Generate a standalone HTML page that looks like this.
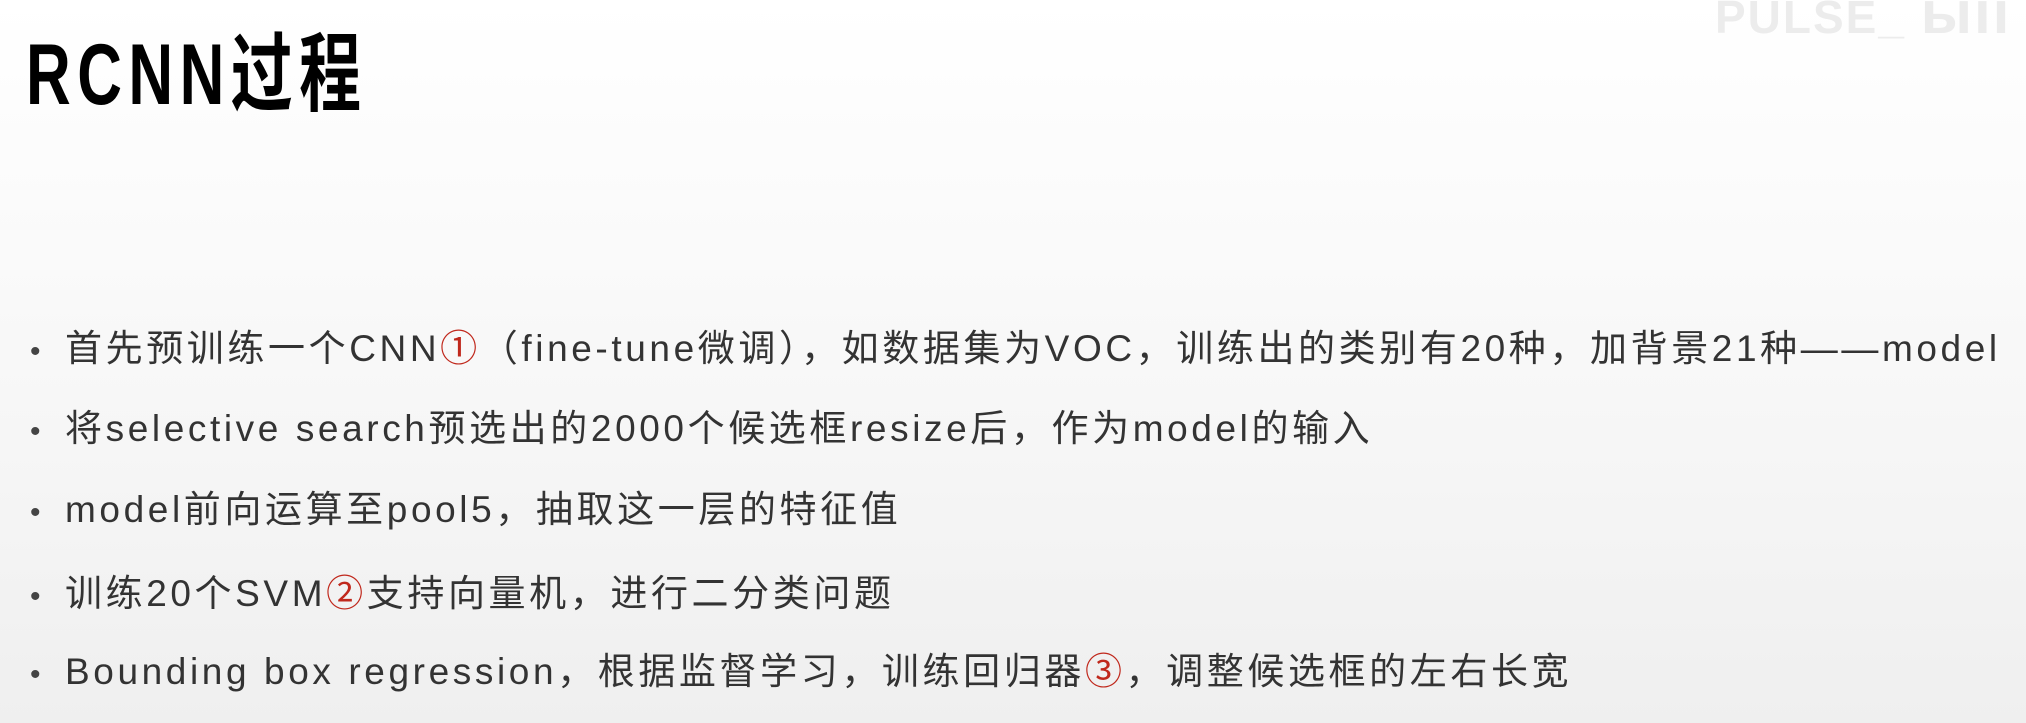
<!DOCTYPE html>
<html><head><meta charset="utf-8"><style>
html,body{margin:0;padding:0}
body{width:2026px;height:723px;overflow:hidden;position:relative;background:linear-gradient(#ffffff 0px,#fdfdfd 100px,#f7f7f7 400px,#efefef 723px);font-family:"Liberation Sans","Noto Sans CJK SC",sans-serif}
h1{position:absolute;left:26px;top:20px;margin:0;font-size:86px;font-weight:bold;color:#000;letter-spacing:9px;line-height:110px;transform:scaleX(0.72);transform-origin:left top}
.wm{position:absolute;left:1715px;top:-22px;font-size:46px;font-weight:bold;color:#ececec;letter-spacing:2px}
.li{position:absolute;left:30px;font-size:37px;color:#333;letter-spacing:3.6px;white-space:nowrap;line-height:50px}
.li:before{content:"•";display:inline-block;width:35px;color:#444;font-size:30px}
.r{color:#c0281c}
</style></head><body>
<h1>RCNN过程</h1>
<div class="wm">PULSE_ <span style="font-size:60px">ыıı</span></div>
<div class="li" style="top:324px">首先预训练一个CNN<span class="r">①</span>（fine-tune微调），如数据集为VOC，训练出的类别有20种，加背景21种——model</div>
<div class="li" style="top:404px">将selective search预选出的2000个候选框resize后，作为model的输入</div>
<div class="li" style="top:485px">model前向运算至pool5，抽取这一层的特征值</div>
<div class="li" style="top:569px">训练20个SVM<span class="r">②</span>支持向量机，进行二分类问题</div>
<div class="li" style="top:647px">Bounding box regression，根据监督学习，训练回归器<span class="r">③</span>，调整候选框的左右长宽</div>
</body></html>
